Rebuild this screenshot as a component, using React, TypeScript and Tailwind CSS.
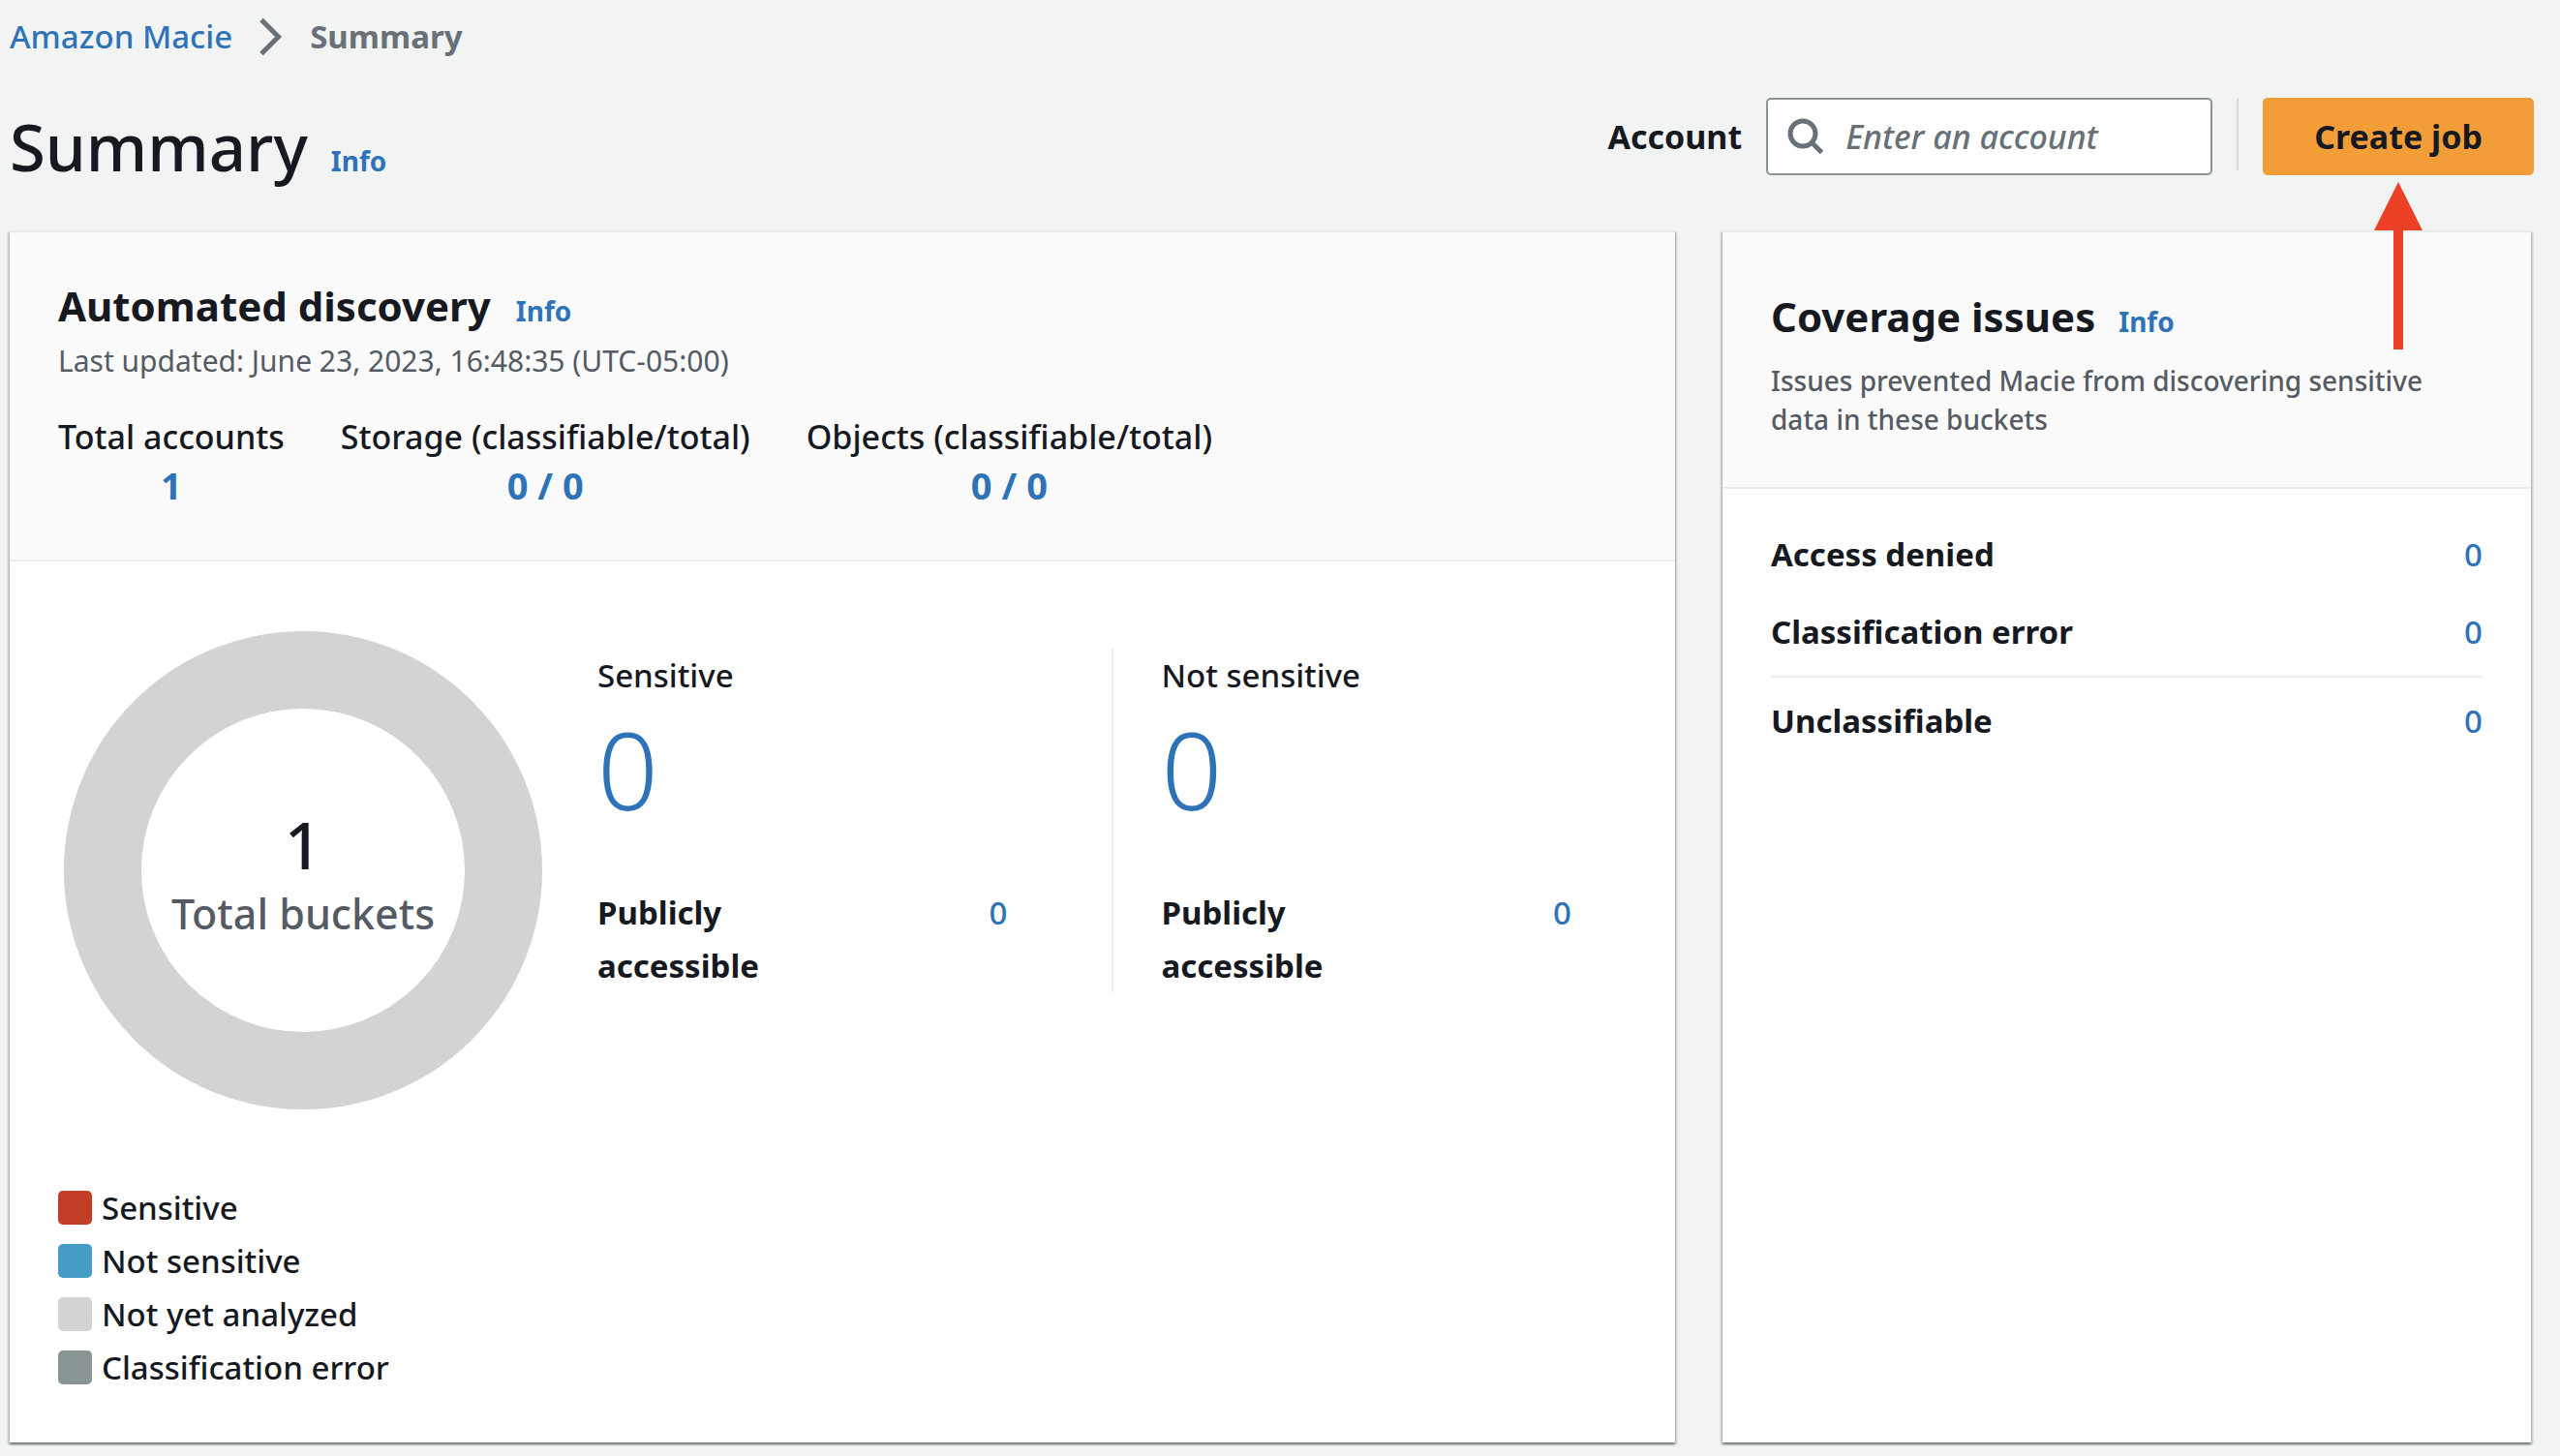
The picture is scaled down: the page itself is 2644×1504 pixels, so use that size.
import type { ReactNode } from 'react';

const legend = [
  { label: 'Sensitive', color: 'bg-[#c13d25]' },
  { label: 'Not sensitive', color: 'bg-[#449dc5]' },
  { label: 'Not yet analyzed', color: 'bg-[#d3d3d3]' },
  { label: 'Classification error', color: 'bg-[#899495]' },
];

const totals = [
  { label: 'Total accounts', value: '1' },
  { label: 'Storage (classifiable/total)', value: '0 / 0' },
  { label: 'Objects (classifiable/total)', value: '0 / 0' },
];

function Link({ children, className = '' }: { children: ReactNode; className?: string }) {
  return (
    <a href="#" className={`text-[#2e73b8] hover:underline ${className}`}>
      {children}
    </a>
  );
}

function InfoLink() {
  return <Link className="text-[28px] font-bold">Info</Link>;
}

function Card({ children }: { children: ReactNode }) {
  return (
    <section className="flex flex-col border-t-2 border-[#eaeded] bg-white shadow-[0_2px_2px_0_#75827f,2px_2px_2px_0_rgba(0,7,22,0.15),-2px_2px_2px_0_rgba(0,7,22,0.15)]">
      {children}
    </section>
  );
}

function BucketDonut() {
  return (
    <div className="relative size-[494px]">
      <svg viewBox="0 0 494 494" className="size-full" aria-hidden="true">
        <circle cx="247" cy="247" r="207" fill="none" stroke="#d3d3d3" strokeWidth="80" />
      </svg>
      <div className="absolute inset-0 flex flex-col items-center justify-center pt-[18px]">
        <span className="text-[67px] leading-[72px]">1</span>
        <span className="text-[43px] leading-[72px] text-[#545b64]">Total buckets</span>
      </div>
    </div>
  );
}

function SensitivityColumn({ title }: { title: string }) {
  return (
    <div className="flex-1">
      <h3 className="leading-[55px]">{title}</h3>
      <Link className="mt-[14px] block w-fit text-[110px] leading-[110px] font-[350]">0</Link>
      <div className="mt-[66px] flex justify-between pr-[57px] leading-[55px]">
        <span className="max-w-[220px] font-bold">Publicly accessible</span>
        <Link>0</Link>
      </div>
    </div>
  );
}

function IssueRow({ label }: { label: string }) {
  return (
    <div className="flex justify-between leading-[55px]">
      <dt className="font-bold">{label}</dt>
      <dd>
        <Link>0</Link>
      </dd>
    </div>
  );
}

export default function App() {
  return (
    <div className="min-h-screen bg-[#f2f3f3] pt-[10px] pr-[30px] pb-[14px] pl-[10px] font-['Noto_Sans',sans-serif] text-[33px] font-medium text-[#16191f]">
      <nav aria-label="Breadcrumb" className="flex items-center gap-[28px] leading-[55px]">
        <Link>Amazon Macie</Link>
        <svg viewBox="0 0 24 40" className="h-[40px] w-[24px]" fill="none" stroke="#687078" strokeWidth="5" aria-hidden="true">
          <path d="M2 2.500 19.500 20 2 37.500" />
        </svg>
        <span className="font-bold text-[#687078]">Summary</span>
      </nav>

      <header className="mt-[36px] flex items-start justify-between">
        <div className="flex items-baseline gap-[24px] pt-[5px]">
          <h1 className="text-[67px] leading-[90px]">Summary</h1>
          <InfoLink />
        </div>
        <div className="-mr-[3px] flex items-center gap-[25px]">
          <label htmlFor="account" className="text-[34px] font-bold">
            Account
          </label>
          <div className="flex h-[80px] w-[461px] items-center gap-[22px] rounded-[5px] border-2 border-[#879596] bg-white px-[20px]">
            <svg viewBox="0 0 38 38" className="size-[38px] shrink-0" fill="none" stroke="#687078" strokeWidth="5" aria-hidden="true">
              <circle cx="16" cy="16" r="13" />
              <path d="m25 25 10.500 10.500" />
            </svg>
            <input
              id="account"
              type="text"
              placeholder="Enter an account"
              className="min-w-0 flex-1 bg-transparent text-[34px] outline-none placeholder:text-[#687078] placeholder:italic"
            />
          </div>
          <div className="h-[75px] w-[2px] self-start bg-[#d5dbdb]" />
          <div className="relative">
            <button type="button" className="h-[80px] rounded-[5px] bg-[#f29d38] px-[53px] text-[34px] font-bold">
              Create job
            </button>
            <svg viewBox="0 0 50 173" className="absolute top-full left-1/2 z-10 mt-[7px] h-[173px] w-[50px] -translate-x-1/2" fill="#eb4026" aria-hidden="true">
              <path d="M25 0 50 50H30V173H20V50H0z" />
            </svg>
          </div>
        </div>
      </header>

      <main className="mt-[42px] grid grid-cols-[1720fr_835fr] gap-[49px]">
        <Card>
          <div className="border-b-2 border-[#eaeded] bg-[#fafafa] px-[50px] pt-[48px] pb-[49px]">
            <div className="flex items-baseline gap-[26px]">
              <h2 className="text-[42px] leading-[55px] font-bold">Automated discovery</h2>
              <InfoLink />
            </div>
            <p className="mt-[10px] text-[30px] leading-[40px] font-normal text-[#545b64]">
              Last updated: June 23, 2023, 16:48:35 (UTC-05:00)
            </p>
            <dl className="mt-[33px] flex gap-[58px] text-center leading-[50px]">
              {totals.map((t) => (
                <div key={t.label}>
                  <dt className="text-[34px]">{t.label}</dt>
                  <dd>
                    <Link className="text-[38px] font-bold">{t.value}</Link>
                  </dd>
                </div>
              ))}
            </dl>
          </div>

          <div className="px-[50px] pt-[72px] pb-[50px]">
            <div className="flex items-start">
              <div className="pr-[57px] pl-[6px]">
                <BucketDonut />
              </div>
              <div className="mt-[18px] flex flex-1">
                <SensitivityColumn title="Sensitive" />
                <div className="mr-[50px] ml-[50px] w-[2px] bg-[#eaeded]" />
                <SensitivityColumn title="Not sensitive" />
              </div>
            </div>
            <ul className="mt-[74px]">
              {legend.map((l) => (
                <li key={l.label} className="flex items-center gap-[10px] leading-[55px]">
                  <span className={`size-[35px] rounded-[5px] ${l.color}`} />
                  {l.label}
                </li>
              ))}
            </ul>
          </div>
        </Card>

        <Card>
          <div className="border-b-2 border-[#eaeded] bg-[#fafafa] px-[50px] pt-[59px] pb-[50px]">
            <div className="flex items-baseline gap-[24px]">
              <h2 className="text-[42px] leading-[55px] font-bold">Coverage issues</h2>
              <InfoLink />
            </div>
            <p className="mt-[19px] max-w-[700px] text-[28px] leading-[40px] text-[#545b64]">
              Issues prevented Macie from discovering sensitive data in these buckets
            </p>
          </div>
          <dl className="px-[50px] pt-[40px]">
            <div className="flex flex-col gap-[25px] border-b-2 border-[#eaeded] pb-[18px]">
              <IssueRow label="Access denied" />
              <IssueRow label="Classification error" />
            </div>
            <div className="pt-[17px]">
              <IssueRow label="Unclassifiable" />
            </div>
          </dl>
        </Card>
      </main>
    </div>
  );
}
